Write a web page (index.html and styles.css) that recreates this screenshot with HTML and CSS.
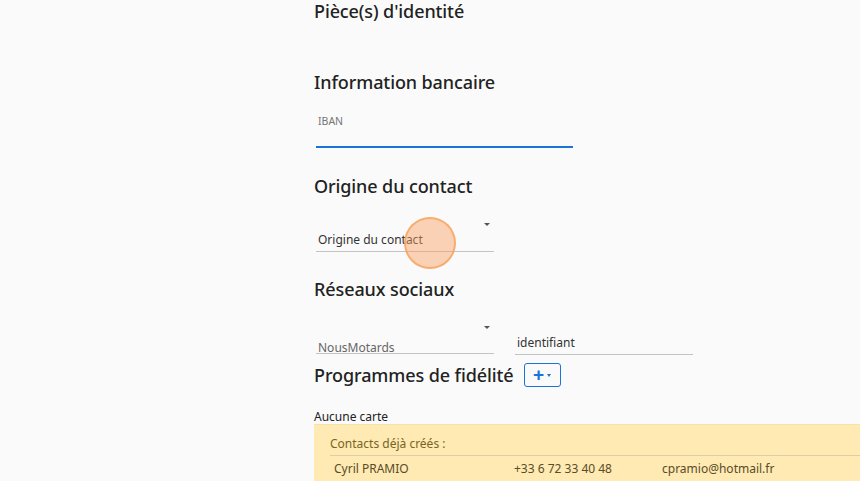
FILE: index.html
```html
<!DOCTYPE html>
<html lang="fr">
<head>
<meta charset="utf-8">
<link rel="stylesheet" href="styles.css">
</head>
<body>
<main class="page">
  <section class="sec sec-id">
    <h2 class="title">Pièce(s) d'identité</h2>
  </section>

  <section class="sec sec-bank">
    <h2 class="title">Information bancaire</h2>
    <div class="field iban">
      <span class="float-label">IBAN</span>
    </div>
  </section>

  <section class="sec sec-origin">
    <h2 class="title">Origine du contact</h2>
    <div class="select origin-select">
      <span class="caret"></span>
      <span class="select-value dark">Origine du contact</span>
      <span class="tap"></span>
    </div>
  </section>

  <section class="sec sec-social">
    <h2 class="title">Réseaux sociaux</h2>
    <div class="social-row">
      <div class="select social-select">
        <span class="caret"></span>
        <span class="select-value">NousMotards</span>
      </div>
      <div class="input ident">identifiant</div>
    </div>
  </section>

  <section class="sec sec-fid">
    <div class="fid-head">
      <h2 class="title">Programmes de fidélité</h2>
      <button class="add-btn"><span class="plus">+</span><span class="mini-caret"></span></button>
    </div>
    <p class="none">Aucune carte</p>
    <div class="alert">
      <div class="alert-title">Contacts déjà créés :</div>
      <div class="alert-row">
        <span class="c-name">Cyril PRAMIO</span>
        <span class="c-phone">+33 6 72 33 40 48</span>
        <span class="c-mail">cpramio@hotmail.fr</span>
      </div>
    </div>
  </section>
</main>
</body>
</html>
```

FILE: styles.css
```css
html, body {
  margin: 0;
  padding: 0;
  height: 100%;
  overflow: hidden;
}
body {
  background: #fafafa;
  font-family: "Noto Sans", "Open Sans", sans-serif;
  color: #222;
}
.page {
  padding-left: 314px;
  display: flex;
  flex-direction: column;
}
.title {
  margin: 0;
  font-size: 18px;
  font-weight: 550;
  color: #222;
  line-height: 22px;
  letter-spacing: -0.1px;
}
.sec-id { margin-top: 0; }
.sec-bank { margin-top: 49px; }
.field.iban {
  position: relative;
  margin-top: 15px;
  margin-left: 2px;
  width: 257px;
  height: 38px;
  border-bottom: 2px solid #1a73d9;
}
.float-label {
  position: absolute;
  left: 2px;
  top: 6px;
  font-size: 10.5px;
  color: #777;
}
.sec-origin { margin-top: 27px; }
.select {
  position: relative;
  margin-left: 2px;
  width: 178px;
  border-bottom: 1px solid #c4c4c4;
}
.caret {
  position: absolute;
  right: 4px;
  top: 0;
  width: 0;
  height: 0;
  border-left: 3px solid transparent;
  border-right: 3px solid transparent;
  border-top: 3px solid #555;
}
.origin-select {
  margin-top: 21px;
  height: 33px;
}
.origin-select .caret { top: 5px; }
.select-value {
  position: absolute;
  left: 2px;
  bottom: 3px;
  font-size: 12px;
  color: #666;
}
.select-value.dark { color: #333; }
.tap {
  position: absolute;
  left: 88px;
  top: -1px;
  width: 52px;
  height: 52px;
  border-radius: 50%;
  background: rgba(250, 160, 95, 0.45);
  border: 2px solid rgba(245, 160, 90, 0.75);
  box-sizing: border-box;
}
.sec-social { margin-top: 26px; }
.social-row {
  display: flex;
  align-items: flex-end;
  gap: 21px;
  margin-top: 26px;
}
.social-select {
  height: 27px;
}
.social-select .caret { top: 0; }
.social-select .select-value { bottom: -3px; }
.input.ident {
  width: 178px;
  font-size: 12px;
  color: #333;
  padding: 0 0 3px 2px;
  border-bottom: 1px solid #c4c4c4;
  box-sizing: border-box;
  margin-bottom: -1px;
}
.sec-fid { margin-top: 8px; }
.fid-head {
  display: flex;
  align-items: center;
  gap: 10px;
}
.add-btn {
  width: 37px;
  height: 24px;
  border: 1px solid #1a73d9;
  border-radius: 3px;
  background: transparent;
  padding: 0;
  display: flex;
  align-items: center;
  justify-content: center;
  gap: 3px;
  margin-top: 1px;
}
.plus {
  color: #1a73d9;
  font-weight: 700;
  font-size: 19px;
  line-height: 1;
  margin-top: -2px;
}
.mini-caret {
  width: 0;
  height: 0;
  border-left: 2.5px solid transparent;
  border-right: 2.5px solid transparent;
  border-top: 3px solid #1a73d9;
}
.none {
  margin: 22px 0 0 0;
  font-size: 12px;
  color: #222;
  line-height: 16px;
}
.alert {
  margin-top: -1px;
  background: #feeab2;
  padding: 11px 0 20px 16px;
  border-top: 1px solid #f6e3a8;
}
.alert-title {
  font-size: 12px;
  color: #7a6425;
  line-height: 16px;
  padding-bottom: 3px;
  border-bottom: 1px solid #dccfa8;
}
.alert-row {
  display: flex;
  font-size: 12px;
  color: #5a4c2a;
  padding-top: 5px;
  padding-left: 4px;
  line-height: 16px;
}
.c-name { width: 180px; }
.c-phone { width: 148px; }
```
